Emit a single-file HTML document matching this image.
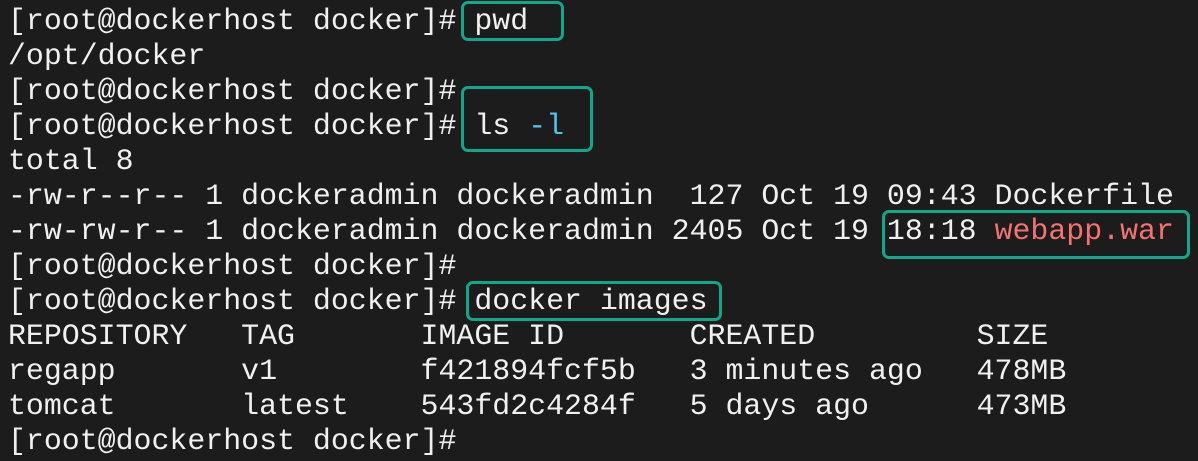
<!DOCTYPE html>
<html><head><meta charset="utf-8"><style>
html,body{margin:0;padding:0;background:#1c1c1c;width:1198px;height:461px;overflow:hidden}
pre{position:absolute;left:8px;top:4px;margin:0;font-family:"Liberation Mono",monospace;font-size:29.9px;line-height:35px;color:#f0f0f0}
.c{color:#4fc3e8}.r{color:#f47272}
.b{position:absolute;border:3px solid #10a889;border-radius:7px;box-sizing:border-box}
</style></head><body>
<pre>[root@dockerhost docker]# pwd
/opt/docker
[root@dockerhost docker]#
[root@dockerhost docker]# ls <span class="c">-l</span>
total 8
-rw-r--r-- 1 dockeradmin dockeradmin  127 Oct 19 09:43 Dockerfile
-rw-rw-r-- 1 dockeradmin dockeradmin 2405 Oct 19 18:18 <span class="r">webapp.war</span>
[root@dockerhost docker]#
[root@dockerhost docker]# docker images
REPOSITORY   TAG       IMAGE ID       CREATED         SIZE
regapp       v1        f421894fcf5b   3 minutes ago   478MB
tomcat       latest    543fd2c4284f   5 days ago      473MB
[root@dockerhost docker]#</pre>
<div class="b" style="left:461px;top:1px;width:103px;height:40px"></div>
<div class="b" style="left:461px;top:86px;width:132px;height:66px"></div>
<div class="b" style="left:882px;top:210px;width:308px;height:49px"></div>
<div class="b" style="left:466px;top:281px;width:256px;height:40px"></div>
</body></html>
